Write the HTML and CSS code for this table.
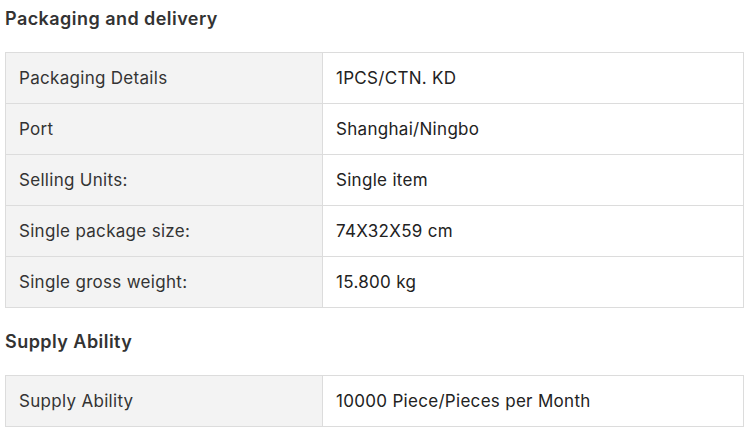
FILE: index.html
```html
<!DOCTYPE html>
<html lang="en">
<head>
<meta charset="utf-8">
<link rel="stylesheet" href="styles.css">
</head>
<body>
<section class="block">
  <h3 class="title">Packaging and delivery</h3>
  <table class="attrs">
    <colgroup><col class="c-name"><col class="c-val"></colgroup>
    <tr><td class="name">Packaging Details</td><td class="val">1PCS/CTN. KD</td></tr>
    <tr><td class="name">Port</td><td class="val">Shanghai/Ningbo</td></tr>
    <tr><td class="name">Selling Units:</td><td class="val">Single item</td></tr>
    <tr><td class="name">Single package size:</td><td class="val">74X32X59 cm</td></tr>
    <tr><td class="name">Single gross weight:</td><td class="val">15.800 kg</td></tr>
  </table>
</section>
<section class="block">
  <h3 class="title">Supply Ability</h3>
  <table class="attrs">
    <colgroup><col class="c-name"><col class="c-val"></colgroup>
    <tr><td class="name">Supply Ability</td><td class="val">10000 Piece/Pieces per Month</td></tr>
  </table>
</section>
</body>
</html>
```
FILE: styles.css
```css
html, body {
  margin: 0;
  padding: 0;
  background: #fff;
}
body {
  padding: 0 7px 0 5px;
  font-family: Inter, "Liberation Sans", sans-serif;
  color: #222;
}
.block + .block {
  margin-top: 15px;
}
.title {
  margin: 0;
  padding: 7px 0 21px;
  font-size: 18px;
  line-height: 24px;
  font-weight: 600;
  letter-spacing: 0.45px;
  color: #333;
}
.attrs {
  width: 100%;
  border-collapse: collapse;
  table-layout: fixed;
}
.c-name { width: 317px; }
.attrs td {
  border: 1px solid #dcdcdc;
  height: 51px;
  padding: 0 13px;
  box-sizing: border-box;
  font-size: 17px;
  line-height: 22px;
  letter-spacing: 0.3px;
  vertical-align: middle;
}
.attrs td.name {
  background: #f3f3f3;
  color: #333;
}
.attrs td.val {
  color: #222;
}
```
